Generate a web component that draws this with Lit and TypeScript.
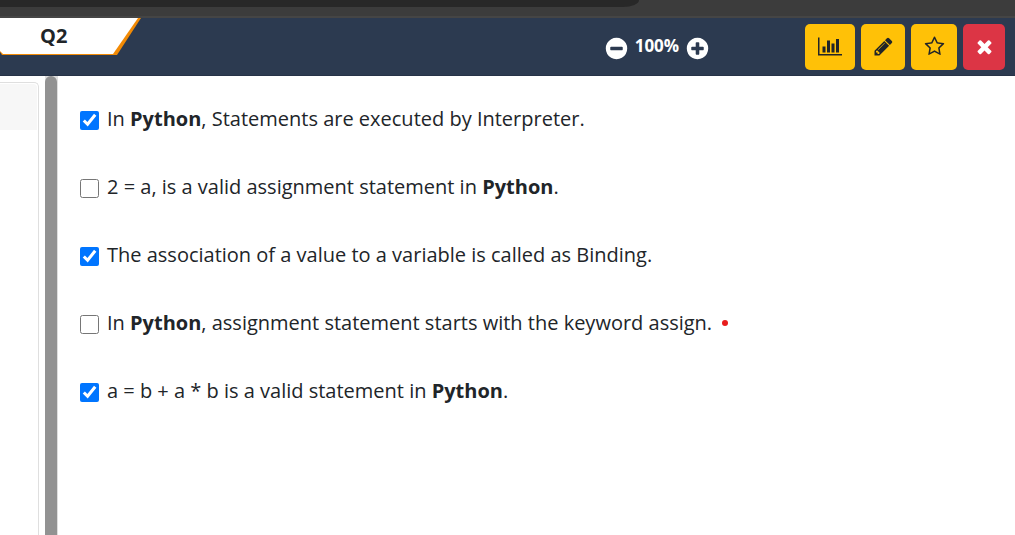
import { LitElement, html, css, svg } from "lit";
import { customElement, property, state } from "lit/decorators.js";

const DISC =
  "m320-64q0 209-103 385.500t-279.500 279.500-385.500 103-385.500-103-279.500-279.500-103-385.500 103-385.500 279.500-279.500 385.500-103 385.500 103 279.500 279.500 103 385.500z";

const ICONS: Record<string, { width: number; path: string }> = {
  chart: {
    width: 2048,
    path: "M640 896v512h-256v-512h256zm384-512v1024h-256v-1024h256zm1024 1152v128h-2048v-1536h128v1408h1920zm-640-896v768h-256v-768h256zm384-384v1152h-256v-1152h256z",
  },
  pencil: {
    width: 1792,
    path: "M491 1536l91-91-235-235-91 91v107h128v128h107zm523-928q0-22-22-22-10 0-17 7l-542 542q-7 7-7 17 0 22 22 22 10 0 17-7l542-542q7-7 7-17zm-54-192l416 416-832 832h-416v-416zm683 96q0 53-37 90l-166 166-416-416 166-165q36-38 90-38 53 0 91 38l235 234q37 39 37 91z",
  },
  star: {
    width: 1792,
    path: "M1201 1004l306-297-422-62-189-382-189 382-422 62 306 297-73 421 378-199 377 199zm527-357q0 22-26 48l-363 354 86 500q1 7 1 20 0 50-41 50-19 0-40-12l-449-236-449 236q-22 12-40 12-21 0-31.500-14.500t-10.500-35.500q0-6 2-20l86-500-364-354q-25-27-25-48 0-37 56-46l502-73 225-455q19-41 49-41t49 41l225 455 502 73q56 9 56 46z",
  },
  close: {
    width: 1792,
    path: "M1490 1322q0 40-28 68l-136 136q-28 28-68 28t-68-28l-294-294-294 294q-28 28-68 28t-68-28l-136-136q-28-28-28-68t28-68l294-294-294-294q-28-28-28-68t28-68l136-136q28-28 68-28t68 28l294 294 294-294q28-28 68-28t68 28l136 136q28 28 28 68t-28 68l-294 294 294 294q28 28 28 68z",
  },
  minus: {
    width: 1792,
    path: "M1344 960v-128q0-26-19-45t-45-19h-768q-26 0-45 19t-19 45v128q0 26 19 45t45 19h768q26 0 45-19t19-45z" + DISC,
  },
  plus: {
    width: 1792,
    path:
      "M1344 960v-128q0-26-19-45t-45-19h-256v-256q0-26-19-45t-45-19h-128q-26 0-45 19t-19 45v256h-256q-26 0-45 19t-19 45v128q0 26 19 45t45 19h256v256q0 26 19 45t45 19h128q26 0 45-19t19-45v-256h256q26 0 45-19t19-45z" +
      DISC,
  },
};

@customElement("quiz-icon")
class QuizIcon extends LitElement {
  @property() name = "star";

  static styles = css`
    :host {
      display: flex;
      justify-content: center;
      height: 21px;
    }
    svg {
      display: block;
      flex: none;
      height: 100%;
      fill: currentColor;
    }
  `;

  render() {
    const icon = ICONS[this.name];
    return html`<svg viewBox="0 0 ${icon.width} 1792" aria-hidden="true">
      ${svg`<path d=${icon.path}></path>`}
    </svg>`;
  }
}

@customElement("quiz-header")
class QuizHeader extends LitElement {
  @state() private zoom = 100;

  static styles = css`
    :host {
      display: grid;
      grid-template-columns: 2fr auto 1fr;
      height: 58px;
      box-sizing: border-box;
      background: #2c3a50;
      border-bottom: 1px solid #263247;
      color: #fff;
    }
    .left {
      display: flex;
      align-items: flex-start;
    }
    .tab {
      display: grid;
      width: 142px;
      height: 38px;
    }
    .shape,
    .label {
      grid-area: 1 / 1;
    }
    .shape {
      display: block;
    }
    .label {
      margin: 0;
      padding-left: 40px;
      font-size: 20px;
      line-height: 36px;
      font-weight: 700;
      color: #212529;
    }
    .zoom {
      display: flex;
      align-items: center;
      gap: 7px;
      padding-right: 4px;
    }
    .percent {
      font-size: 17px;
      line-height: 24px;
      font-weight: 700;
      padding-bottom: 2px;
    }
    .round {
      display: block;
      padding: 3px 0 0;
      border: 0;
      background: none;
      color: inherit;
      cursor: pointer;
    }
    .round quiz-icon {
      width: 22px;
      height: 25px;
    }
    .actions {
      display: flex;
      justify-content: flex-end;
      align-items: center;
      gap: 6px;
      padding: 0 10px;
    }
    .btn {
      height: 46px;
      padding: 0 13px;
      border: 0;
      border-radius: 5px;
      background: #ffc107;
      color: #212529;
      cursor: pointer;
    }
    .chart {
      width: 50px;
    }
    .pencil {
      width: 44px;
    }
    .star {
      width: 46px;
    }
    .close {
      width: 42px;
      background: #dc3545;
      color: #fff;
    }
  `;

  private change(step: number) {
    this.zoom = Math.min(200, Math.max(50, this.zoom + step));
  }

  render() {
    return html`
      <div class="left">
        <div class="tab">
          <svg class="shape" width="142" height="38" aria-hidden="true">
            <path d="M0 0H141L117 37H2L0 34Z" fill="#f28a05"></path>
            <path d="M0 0H138L113 36H3L0 33Z" fill="#fff"></path>
          </svg>
          <h1 class="label">Q2</h1>
        </div>
      </div>
      <div class="zoom">
        <button class="round" aria-label="Zoom out" @click=${() => this.change(-10)}>
          <quiz-icon name="minus"></quiz-icon>
        </button>
        <span class="percent">${this.zoom}%</span>
        <button class="round" aria-label="Zoom in" @click=${() => this.change(10)}>
          <quiz-icon name="plus"></quiz-icon>
        </button>
      </div>
      <div class="actions">
        <button class="btn chart" aria-label="Statistics"><quiz-icon name="chart"></quiz-icon></button>
        <button class="btn pencil" aria-label="Edit"><quiz-icon name="pencil"></quiz-icon></button>
        <button class="btn star" aria-label="Favourite"><quiz-icon name="star"></quiz-icon></button>
        <button class="btn close" aria-label="Close"><quiz-icon name="close"></quiz-icon></button>
      </div>
    `;
  }
}

@customElement("app-root")
class AppRoot extends LitElement {
  static styles = css`
    :host {
      display: flex;
      flex-direction: column;
      height: 100vh;
      overflow: hidden;
      background: #fff;
      color: #212529;
      font-family: "Segoe UI", "Open Sans", "Noto Sans", sans-serif;
    }
    .chrome {
      flex: none;
      height: 18px;
      box-sizing: border-box;
      background: #3c3c3c;
      border-bottom: 2px solid #454545;
    }
    .field {
      width: 63%;
      height: 7px;
      background: #282828;
      border-bottom-right-radius: 16px 7px;
    }
    quiz-header {
      flex: none;
    }
    .body {
      flex: 1;
      min-height: 0;
      display: grid;
      grid-template-columns: 39px 13px 1fr;
      column-gap: 6px;
    }
    .card {
      margin-top: 6px;
      border: 1px solid #dfdfdf;
      border-width: 1px 1px 0 0;
      border-top-right-radius: 5px;
      padding: 1px 1px 0 0;
    }
    .card-head {
      height: 46px;
      background: #f7f7f7;
      border-top-right-radius: 4px;
    }
    .track {
      background: #dedede;
      padding-right: 1px;
    }
    .thumb {
      height: 100%;
      background: #929292;
      border-radius: 6px 6px 0 0;
    }
    .options {
      padding: 27px 16px 0;
      display: flex;
      flex-direction: column;
      gap: 36px;
    }
    .option {
      display: flex;
      align-items: center;
      gap: 8px;
      font-size: 20px;
      line-height: 32px;
    }
    .option input {
      flex: none;
      width: 19px;
      height: 19px;
      margin: 2px 0 0;
    }
    .dot {
      width: 6px;
      height: 6px;
      margin-left: 2px;
      border-radius: 50%;
      background: #e81c1c;
    }
  `;

  private options = [
    { text: html`In <b>Python</b>, Statements are executed by Interpreter.`, checked: true },
    { text: html`2 = a, is a valid assignment statement in <b>Python</b>.`, checked: false },
    { text: html`The association of a value to a variable is called as Binding.`, checked: true },
    { text: html`In <b>Python</b>, assignment statement starts with the keyword assign.`, checked: false, marked: true },
    { text: html`a = b + a * b is a valid statement in <b>Python</b>.`, checked: true },
  ];

  render() {
    return html`
      <div class="chrome"><div class="field"></div></div>
      <quiz-header></quiz-header>
      <main class="body">
        <div class="card"><div class="card-head"></div></div>
        <div class="track"><div class="thumb"></div></div>
        <div class="options">
          ${this.options.map(
            (o) => html`<label class="option">
              <input type="checkbox" .checked=${o.checked} />
              <span>${o.text}</span>
              ${o.marked ? html`<i class="dot"></i>` : null}
            </label>`
          )}
        </div>
      </main>
    `;
  }
}
